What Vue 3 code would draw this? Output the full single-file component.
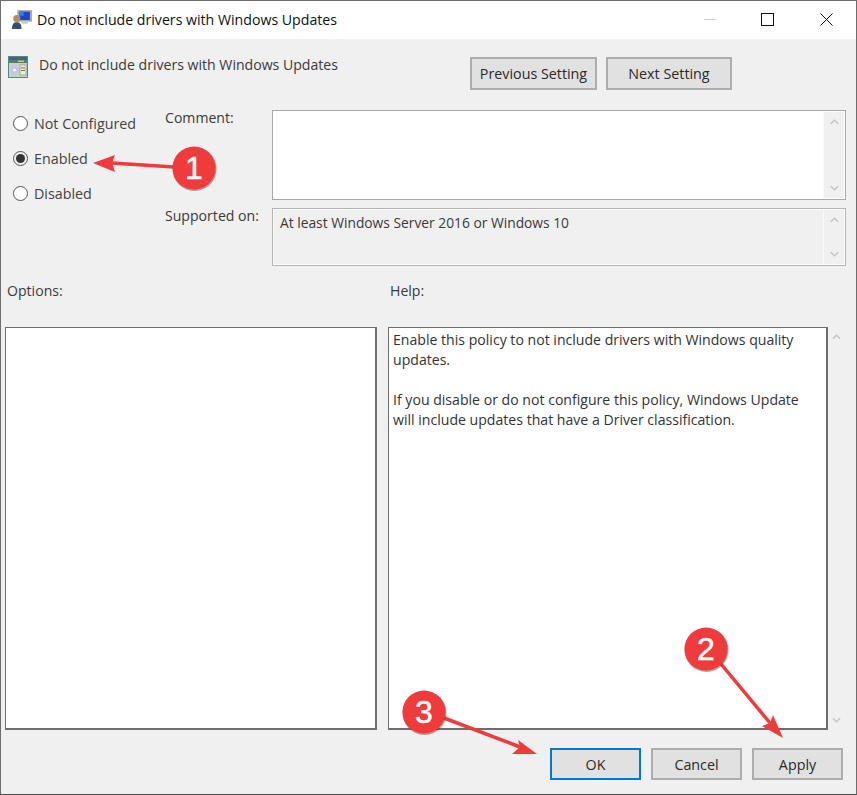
<script setup>
const radios = [
  { label: 'Not Configured', checked: false },
  { label: 'Enabled', checked: true },
  { label: 'Disabled', checked: false },
]

const markers = [
  { n: 1, cx: 194, cy: 168, line: 'M174 167L112 163', head: '93,163 115,155 112,163 115,172' },
  { n: 2, cx: 706, cy: 649, line: 'M721 664L770 723', head: '783,738 762,726 770,723 773,715' },
  { n: 3, cx: 424, cy: 712, line: 'M444 718L520 747', head: '537,754 512,754 520,747 518,740' },
]
</script>

<template>
  <div class="window">
    <header class="titlebar">
      <svg class="app-icon" viewBox="0 0 20 20">
        <rect x="6" y="1" width="14" height="11" fill="#a9a9a9" />
        <rect x="8" y="2.500" width="10" height="8" fill="#1c45d6" />
        <rect x="8" y="2.500" width="4" height="4" fill="#3b78e8" />
        <path d="M10 12h6v2h-6z" fill="#c4c4c4" />
        <circle cx="5.500" cy="9" r="3.400" fill="#b98a62" />
        <path d="M1 19c0-5 1.800-6.500 4.500-6.500s4.500 1.500 4.500 6.500z" fill="#33506e" />
      </svg>
      <span class="title">Do not include drivers with Windows Updates</span>
      <div class="controls">
        <span class="minimize"></span>
        <span class="maximize"></span>
        <svg class="close" viewBox="0 0 13 13">
          <path d="M.5.5l12 12M12.500.5l-12 12" stroke="#111" fill="none" />
        </svg>
      </div>
    </header>

    <main class="body">
      <div class="top-row">
        <svg class="policy-icon" viewBox="0 0 20 22">
          <rect x=".5" y=".5" width="19" height="21" fill="#c9d2c4" stroke="#4f8a84" />
          <rect x="1" y="1" width="18" height="3" fill="#5c5a78" />
          <rect x="1" y="4" width="18" height="3" fill="#4f7f70" />
          <rect x="10" y="4.500" width="6" height="1.500" fill="#e6c34d" />
          <circle cx="6.500" cy="14" r="4.200" fill="#c6c2ea" />
          <circle cx="6.500" cy="14" r="1.300" fill="#fff" />
          <rect x="12" y="9" width="6" height="10" fill="#ecebdc" stroke="#8c8a6c" stroke-width=".6" />
          <path d="M13 12h4M13 14.500h4" stroke="#77775c" />
        </svg>
        <span class="policy-name">Do not include drivers with Windows Updates</span>
        <div class="nav-buttons">
          <button type="button" class="btn nav">Previous Setting</button>
          <button type="button" class="btn nav">Next Setting</button>
        </div>
      </div>

      <div class="state-row">
        <div class="radios">
          <label v-for="r in radios" :key="r.label" class="radio">
            <span class="radio-dot" :class="{ checked: r.checked }"></span>
            {{ r.label }}
          </label>
        </div>
        <div class="fields">
          <span class="field-label">Comment:</span>
          <div class="box comment">
            <div class="scroll">
              <svg viewBox="0 0 10 6"><path d="M1 5l4-4 4 4" /></svg>
              <svg viewBox="0 0 10 6"><path d="M1 1l4 4 4-4" /></svg>
            </div>
          </div>
          <span class="field-label">Supported on:</span>
          <div class="box supported">
            <span class="supported-text">At least Windows Server 2016 or Windows 10</span>
            <div class="scroll">
              <svg viewBox="0 0 10 6"><path d="M1 5l4-4 4 4" /></svg>
              <svg viewBox="0 0 10 6"><path d="M1 1l4 4 4-4" /></svg>
            </div>
          </div>
        </div>
      </div>

      <div class="pane-labels">
        <span class="options-label">Options:</span>
        <span>Help:</span>
      </div>

      <div class="panes">
        <div class="pane options"></div>
        <div class="pane help">
          <p>Enable this policy to not include drivers with Windows quality updates.</p>
          <p>If you disable or do not configure this policy, Windows Update will include updates that have a Driver classification.</p>
        </div>
        <div class="pane-scroll">
          <svg viewBox="0 0 10 6"><path d="M1 5l4-4 4 4" /></svg>
          <svg viewBox="0 0 10 6"><path d="M1 1l4 4 4-4" /></svg>
        </div>
      </div>

      <footer class="actions">
        <button type="button" class="btn action default">OK</button>
        <button type="button" class="btn action">Cancel</button>
        <button type="button" class="btn action">Apply</button>
      </footer>
    </main>

    <svg class="callouts" viewBox="0 0 857 795">
      <g v-for="m in markers" :key="m.n">
        <path :d="m.line" stroke="#ef3b3b" stroke-width="3.500" fill="none" />
        <polygon :points="m.head" fill="#ef3b3b" />
        <circle :cx="m.cx + .5" :cy="m.cy + 1" r="22" fill="#8f3030" opacity=".5" />
        <circle :cx="m.cx" :cy="m.cy" r="21.500" fill="#ef3b3b" />
        <text :x="m.cx" :y="m.cy + 11" class="callout-num">{{ m.n }}</text>
      </g>
    </svg>
  </div>
</template>

<style scoped>
.window {
  position: relative;
  width: 857px;
  height: 795px;
  box-sizing: border-box;
  display: flex;
  flex-direction: column;
  border: 1px solid #6d6d6d;
  border-bottom-color: #4a4a4a;
  background: #f0f0f0;
  font-family: "Open Sans", "Noto Sans", sans-serif;
  font-size: 14.1px;
  color: #3a3a3a;
  overflow: hidden;
}

.titlebar {
  display: flex;
  align-items: center;
  height: 38px;
  flex: none;
  padding-left: 10px;
  padding-bottom: 2px;
  box-sizing: border-box;
  background: #fff;
  color: #111;
}
.app-icon { width: 21px; height: 21px; margin-right: 5px; }
.title { font-size: 14.15px; }
.controls {
  margin-left: auto;
  display: flex;
  align-items: center;
  padding-right: 23px;
}
.minimize { width: 12px; height: 1px; background: #cfcfcf; margin-right: 45px; }
.maximize { width: 11px; height: 11px; border: 1px solid #111; margin-right: 46px; }
.close { width: 13px; height: 13px; }

.body {
  flex: 1;
  display: flex;
  flex-direction: column;
  min-height: 0;
  padding: 0 10px 0 3px;
}

.top-row {
  display: flex;
  align-items: flex-start;
  height: 71px;
  padding-left: 4px;
  box-sizing: border-box;
  padding-top: 17px;
}
.policy-icon { width: 20px; height: 22px; margin-right: 11px; }
.policy-name { line-height: 18px; }
.nav-buttons {
  display: flex;
  gap: 9px;
  margin-left: 132px;
  margin-top: 1px;
}

.btn {
  box-sizing: border-box;
  height: 33px;
  background: #e1e1e1;
  border: 2px solid #adadad;
  font: inherit;
  font-size: 14.3px;
  color: #2a2a2a;
  padding: 0;
}
.btn.nav { width: 127px; }
.btn.nav + .btn.nav { width: 126px; }
.btn.action { width: 91px; height: 32px; }
.btn.default { border-color: #0078d7; }

.state-row { display: flex; height: 155px; flex: none; }
.radios {
  width: 161px;
  display: flex;
  flex-direction: column;
  gap: 15px;
  padding: 3px 0 0 9px;
  box-sizing: border-box;
}
.radio {
  display: flex;
  align-items: center;
  gap: 6px;
  height: 20px;
  font-size: 14.3px;
  color: #444;
}
.radio-dot {
  width: 15px;
  height: 15px;
  box-sizing: border-box;
  border: 1px solid #555;
  border-radius: 50%;
  background: #fff;
  display: flex;
  align-items: center;
  justify-content: center;
}
.radio-dot.checked { background: #f0f0f0; }
.radio-dot.checked::after {
  content: "";
  width: 9px;
  height: 9px;
  border-radius: 50%;
  background: #333;
}

.fields {
  flex: 1;
  display: grid;
  grid-template-columns: 107px 1fr;
  grid-template-rows: 90px 58px;
  row-gap: 8px;
}
.field-label { line-height: 16px; }
.box {
  position: relative;
  box-sizing: border-box;
  border: 1px solid #b4b4b4;
  display: flex;
}
.comment { background: #fff; border-color: #a8a8a8; }
.supported { box-shadow: inset -1px -1px 0 #fff, inset 1px 1px 0 #fbfbfb; }
.supported-text { flex: 1; padding: 5px 7px; font-size: 13.8px; line-height: 18px; }
.scroll {
  margin: 1px 1px 1px auto;
  width: 21px;
  flex: none;
  background: #f0f0f0;
  border-left: 1px solid #fafafa;
  display: flex;
  flex-direction: column;
  justify-content: space-between;
  align-items: center;
  padding: 7px 0;
  box-sizing: border-box;
}
.scroll svg, .pane-scroll svg {
  width: 9px;
  height: 6px;
  fill: none;
  stroke: #c4c4c4;
  stroke-width: 1.500;
}

.pane-labels {
  display: flex;
  height: 62px;
  flex: none;
  padding-top: 16px;
  padding-left: 3px;
  box-sizing: border-box;
  line-height: 20px;
}
.options-label { width: 383px; }

.panes { display: flex; height: 403px; flex: none; padding-left: 1px; }
.pane {
  box-sizing: border-box;
  background: #fff;
  border: 1px solid #6e6e6e;
  border-right-width: 2px;
  border-bottom-width: 2px;
}
.options { width: 372px; margin-right: 11px; }
.help { width: 440px; padding: 2px 4px; line-height: 20px; color: #333; }
.help p { margin: 0 0 20px; }
.pane-scroll {
  width: 17px;
  display: flex;
  flex-direction: column;
  justify-content: space-between;
  align-items: center;
  padding: 7px 0;
  box-sizing: border-box;
}

.actions {
  display: flex;
  justify-content: flex-end;
  gap: 10px;
  margin-top: 18px;
  padding-right: 3px;
}

.callouts {
  position: absolute;
  left: -1px;
  top: -1px;
  width: 857px;
  height: 795px;
  pointer-events: none;
}
.callout-num {
  font-family: "Liberation Sans", sans-serif;
  font-size: 32px;
  fill: #fff;
  stroke: #fff;
  stroke-width: .5;
  text-anchor: middle;
}
</style>
